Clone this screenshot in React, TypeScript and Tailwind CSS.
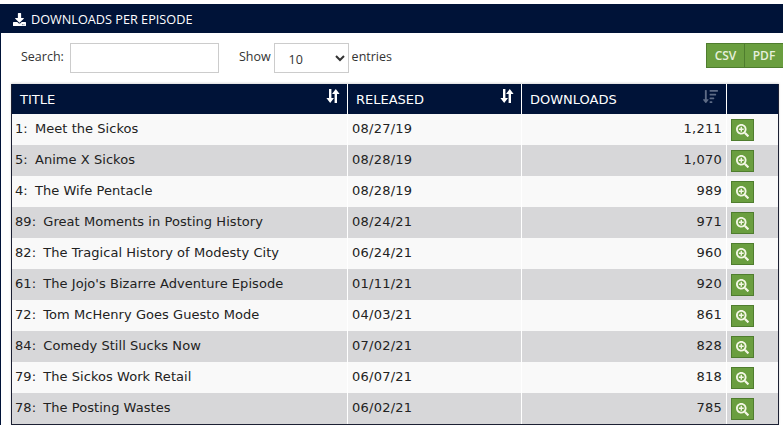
import { FaDownload, FaSortAmountDown, FaSearchPlus } from "react-icons/fa";

const rows = [
  ["1:", "Meet the Sickos", "08/27/19", "1,211"],
  ["5:", "Anime X Sickos", "08/28/19", "1,070"],
  ["4:", "The Wife Pentacle", "08/28/19", "989"],
  ["89:", "Great Moments in Posting History", "08/24/21", "971"],
  ["82:", "The Tragical History of Modesty City", "06/24/21", "960"],
  ["61:", "The Jojo's Bizarre Adventure Episode", "01/11/21", "920"],
  ["72:", "Tom McHenry Goes Guesto Mode", "04/03/21", "861"],
  ["84:", "Comedy Still Sucks Now", "07/02/21", "828"],
  ["79:", "The Sickos Work Retail", "06/07/21", "818"],
  ["78:", "The Posting Wastes", "06/02/21", "785"],
];

const SortIcon = () => (
  <svg width="14" height="14" viewBox="0 0 14 14" className="absolute right-[7px] top-[5px]" fill="currentColor">
    <path d="M3 0h2.4v9H8l-3.8 5L.4 9H3z" />
    <path d="M8.6 14h2.4V5h2.6L9.8 0 6 5h2.6z" />
  </svg>
);

const App = () => {
  return (
    <div className="w-[783px] h-[433px] overflow-hidden bg-white pt-1 font-['Open_Sans',sans-serif] text-[#333]">
      <div className="border-l border-[#001338]">
        <div className="h-[29px] bg-[#001338] flex items-center pl-3 text-white text-[12.7px] gap-[5px]">
          <FaDownload size={13} className="mt-px" />
          <span className="mt-[2px]">DOWNLOADS PER EPISODE</span>
        </div>

        <div className="h-[51px] flex items-start pt-2.5 pl-5 text-[12.5px]">
          <label className="mt-[5px] mr-[6px]">Search:</label>
          <input className="w-[149px] h-[30px] border border-[#ccc]" />
          <label className="ml-5 mt-[5px] mr-[3px]">Show</label>
          <select className="w-[75px] h-[30px] border border-[#ccc] bg-white pl-2.5 pt-0.5 text-[12.5px]">
            <option>10</option>
          </select>
          <span className="ml-[3px] mt-[5px]">entries</span>
          <div className="ml-auto flex h-[25px] text-xs font-semibold text-[#e6f0dc]">
            <div className="w-[39px] bg-[#6a9e3f] border border-[#4f7d2e] flex items-center justify-center">CSV</div>
            <div className="w-[38px] bg-[#6a9e3f] border-y border-[#4f7d2e] flex items-center justify-center">PDF</div>
          </div>
        </div>

        <div className="ml-[10px] w-[768px] border border-[#1c2033] border-t-0 shadow-[0_-1px_2px_rgba(0,0,0,0.15)]">
          <div className="grid grid-cols-[336px_174px_205px_1fr] h-[30px] bg-[#001338] text-white text-[13px] font-['DejaVu_Sans',sans-serif]">
            <div className="relative flex items-center pl-2 pt-0.5 border-r border-white">
              TITLE
              <SortIcon />
            </div>
            <div className="relative flex items-center pl-2 pt-0.5 border-r border-white">
              RELEASED
              <SortIcon />
            </div>
            <div className="relative flex items-center pl-2 pt-0.5 border-r border-white">
              DOWNLOADS
              <FaSortAmountDown size={15} className="absolute right-2 top-[5px] text-[#5d6b85]" />
            </div>
            <div />
          </div>
          {rows.map((r, i) => (
            <div
              key={r[1]}
              className={`grid grid-cols-[336px_174px_205px_1fr] h-[31px] text-[13px] text-[#222] font-['DejaVu_Sans',sans-serif] ${
                i % 2 === 0 ? "bg-[#f9f9f9]" : "bg-[#d7d7d9]"
              }`}
            >
              <div className="pl-[3px] pt-[5px] border-r border-white tracking-[0.05px]">
                <span className="mr-[3px]">{r[0]}</span> {r[1]}
              </div>
              <div className="pl-1 pt-[5px] border-r border-white tracking-[0.25px]">{r[2]}</div>
              <div className="pr-1 pt-[5px] text-right border-r border-white tracking-[0.25px]">{r[3]}</div>
              <div className="pl-1 pt-[5px]">
                <div className="w-[23px] h-[22px] bg-[#6a9e3f] border border-[#4f7d2e] flex items-center justify-center text-[#f4f7e6]">
                  <FaSearchPlus size={13} />
                </div>
              </div>
            </div>
          ))}
        </div>
      </div>
    </div>
  );
};

export default App;
